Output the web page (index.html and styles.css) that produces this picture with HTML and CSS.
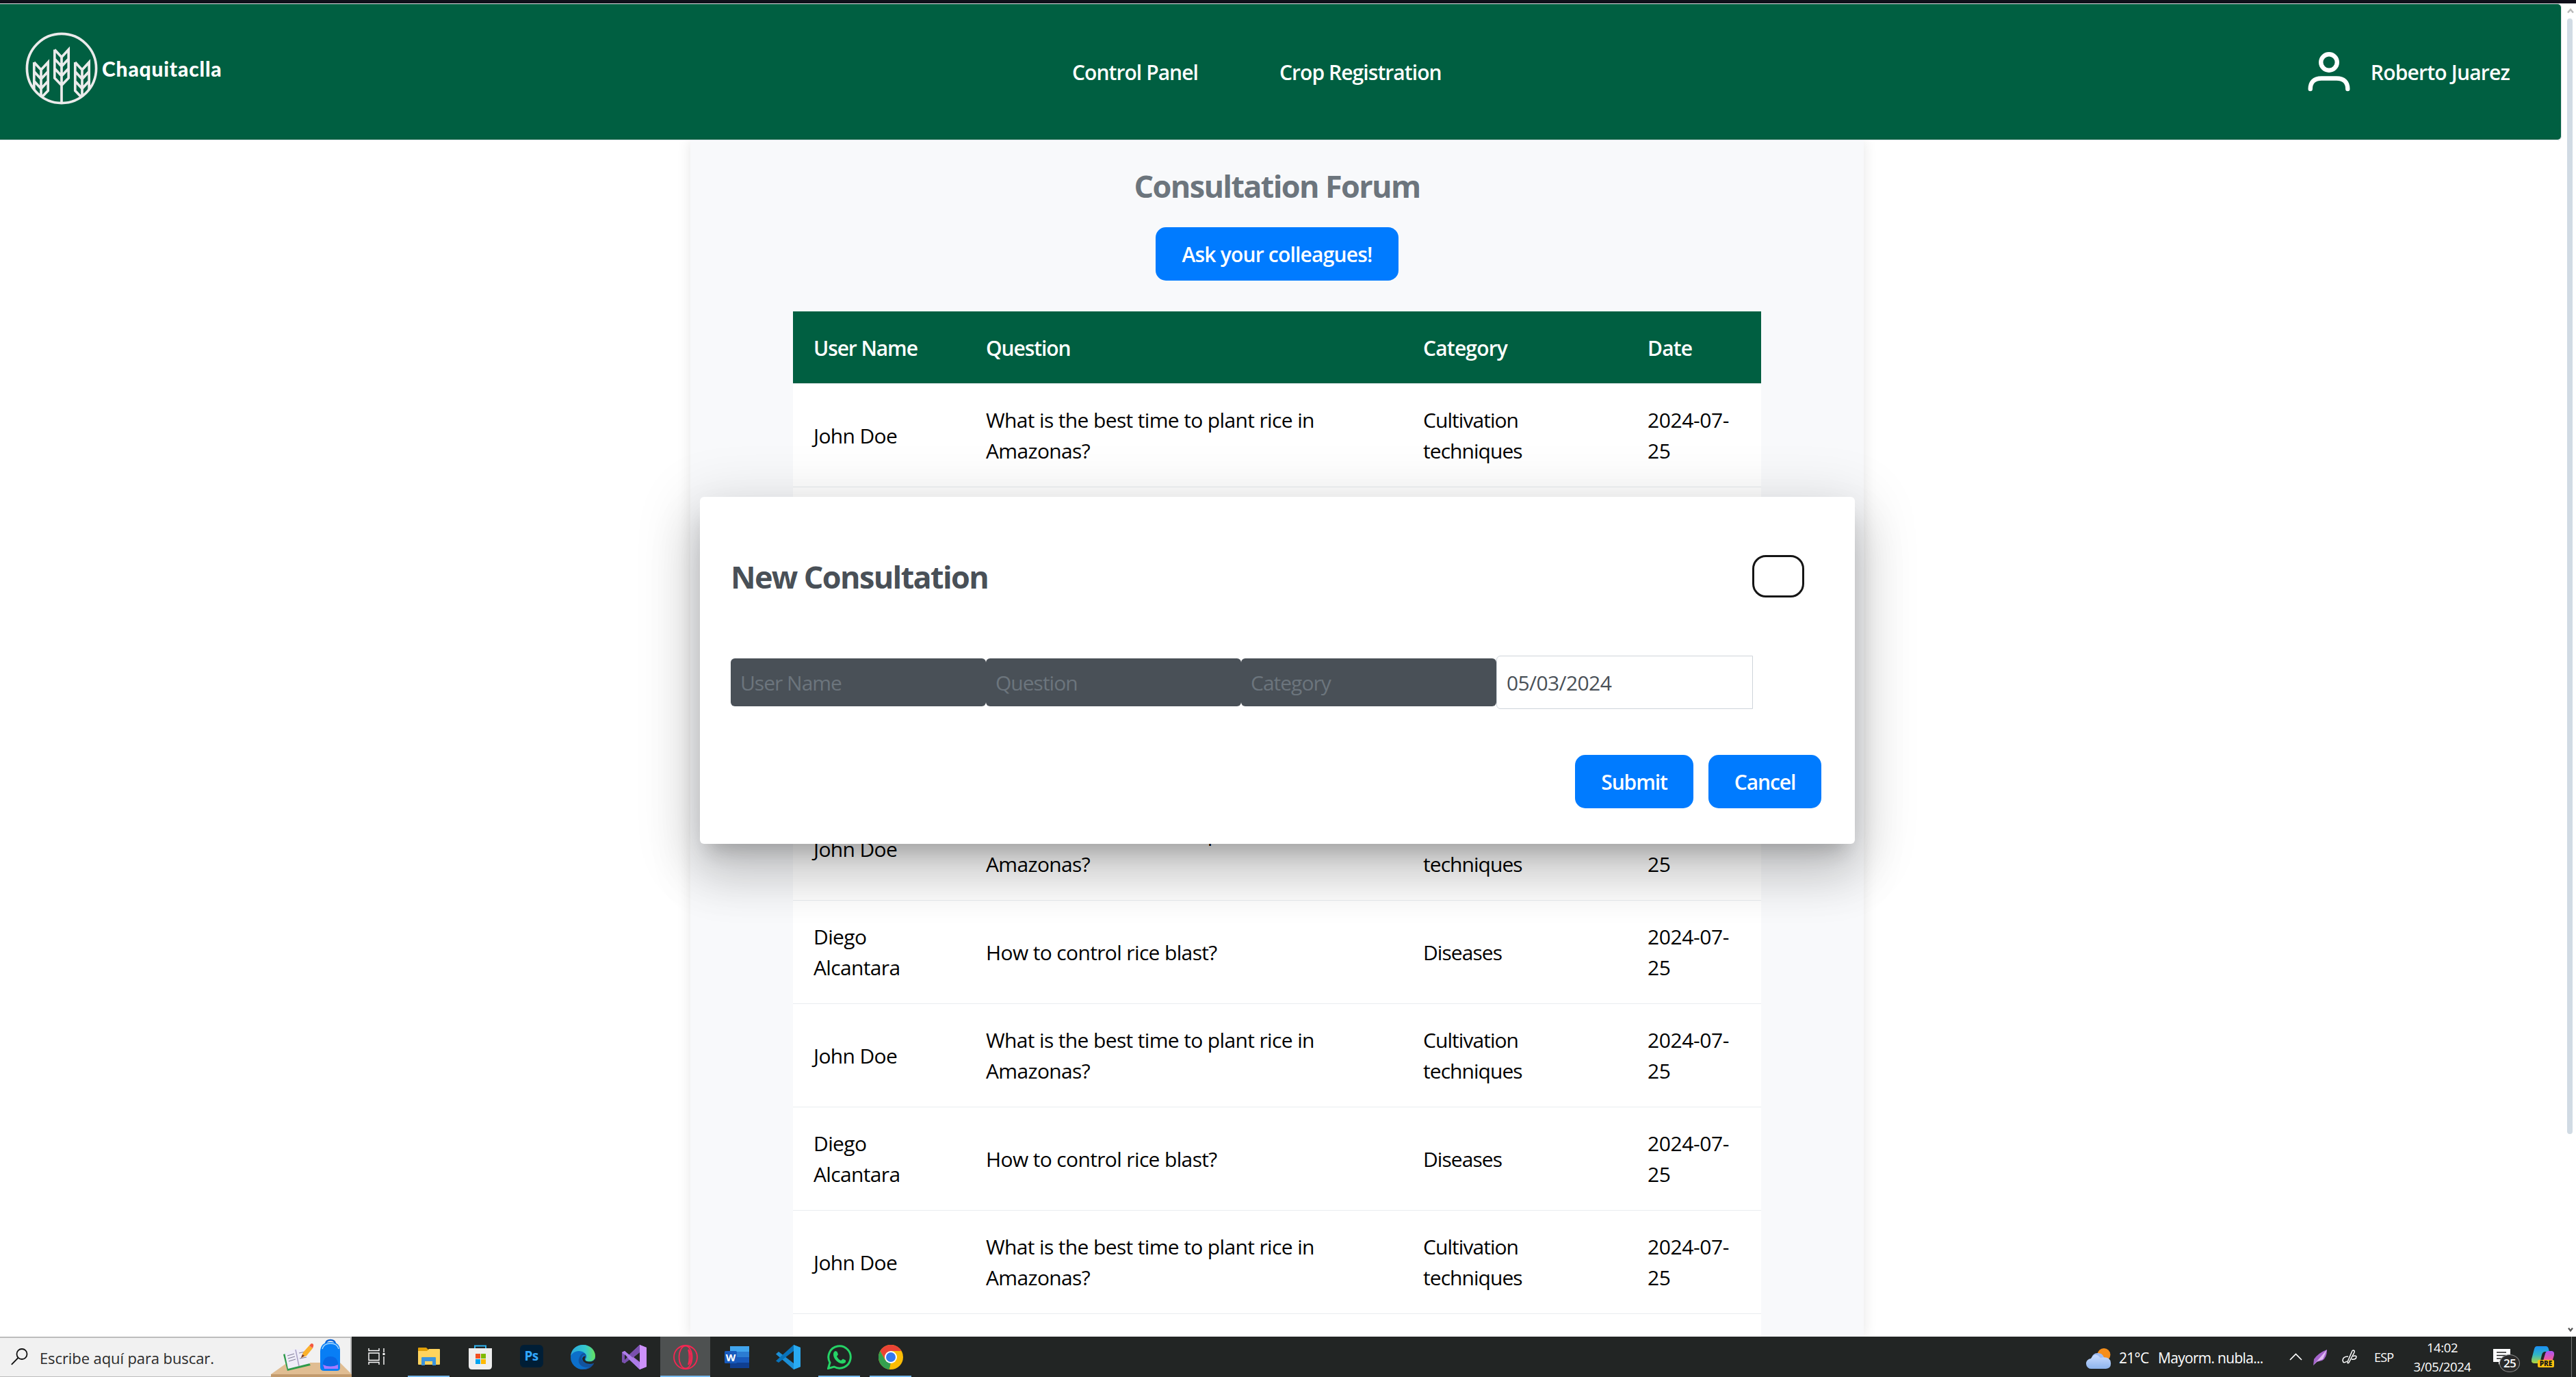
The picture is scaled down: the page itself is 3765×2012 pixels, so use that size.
FILE: index.html
```html
<!DOCTYPE html>
<html lang="en">
<head>
<meta charset="utf-8">
<title>Consultation Forum</title>
<link rel="stylesheet" href="styles.css">
</head>
<body>
<div class="window-edge"></div>
<div class="browser">
  <main class="page">
    <nav class="navbar">
      <div class="brand">
        <svg class="brand-mark" width="106" height="106" viewBox="37 47 106 106" fill="none" stroke="#ebebeb" stroke-width="3.7">
          <defs><clipPath id="disc"><circle cx="90" cy="100" r="52"/></clipPath></defs>
          <circle cx="90" cy="100" r="50.6"/>
          <g clip-path="url(#disc)">
            <g id="ear"><path d="M79.8 72.5V114L90 124.500L100.200 114V72.500L90 83.500L79.800 72.500M79.800 86L90 97L100.200 86M79.800 100L90 111L100.200 100M90 83V150"/></g>
            <use href="#ear" x="-30" y="18.500"/>
            <use href="#ear" x="30" y="18.500"/>
          </g>
        </svg>
        <span class="brand-name">Chaquitaclla</span>
      </div>
      <div class="links"><a>Control Panel</a><a>Crop Registration</a></div>
      <div class="user">
        <svg width="62" height="58" viewBox="0 0 62 58" fill="none" stroke="#fff" stroke-width="6.400" stroke-linecap="round"><circle cx="31" cy="15" r="11.800"/><path d="M3.700 54C3.700 44 9 38.500 20 38.500H42C53 38.500 58.300 44 58.300 54"/></svg>
        <span>Roberto Juarez</span>
      </div>
    </nav>
    <section class="forum">
      <h1>Consultation Forum</h1>
      <button class="btn ask">Ask your colleagues!</button>
      <table>
        <colgroup><col class="c1"><col class="c2"><col class="c3"><col class="c4"></colgroup>
        <thead><tr><th>User Name</th><th>Question</th><th>Category</th><th>Date</th></tr></thead>
        <tbody>
          <tr><td>John Doe</td><td>What is the best time to plant rice in<br>Amazonas?</td><td class="cat">Cultivation<br>techniques</td><td class="num">2024-07-<br>25</td></tr>
          <tr><td>Diego<br>Alcantara</td><td>How to control rice blast?</td><td class="cat">Diseases</td><td class="num">2024-07-<br>25</td></tr>
          <tr><td>John Doe</td><td>What is the best time to plant rice in<br>Amazonas?</td><td class="cat">Cultivation<br>techniques</td><td class="num">2024-07-<br>25</td></tr>
          <tr><td>Diego<br>Alcantara</td><td>How to control rice blast?</td><td class="cat">Diseases</td><td class="num">2024-07-<br>25</td></tr>
          <tr><td>John Doe</td><td>What is the best time to plant rice in<br>Amazonas?</td><td class="cat">Cultivation<br>techniques</td><td class="num">2024-07-<br>25</td></tr>
          <tr><td>Diego<br>Alcantara</td><td>How to control rice blast?</td><td class="cat">Diseases</td><td class="num">2024-07-<br>25</td></tr>
          <tr><td>John Doe</td><td>What is the best time to plant rice in<br>Amazonas?</td><td class="cat">Cultivation<br>techniques</td><td class="num">2024-07-<br>25</td></tr>
          <tr><td>Diego<br>Alcantara</td><td>How to control rice blast?</td><td class="cat">Diseases</td><td class="num">2024-07-<br>25</td></tr>
          <tr><td>John Doe</td><td>What is the best time to plant rice in<br>Amazonas?</td><td class="cat">Cultivation<br>techniques</td><td class="num">2024-07-<br>25</td></tr>
          <tr class="tail"><td></td><td></td><td></td><td></td></tr>
        </tbody>
      </table>
    </section>
  </main>
  <div class="scrollbar">
    <svg width="10" height="8" viewBox="0 0 10 8" fill="none" stroke="#b9b9b9" stroke-width="2.500"><path d="M1 6.500L5 2L9 6.500"/></svg>
    <div class="thumb"></div>
    <svg class="down" width="10" height="8" viewBox="0 0 10 8" fill="none" stroke="#555" stroke-width="2.200"><path d="M2 1.500L5 5.500L8 1.500"/></svg>
  </div>
  <div class="dialog">
    <header><h2>New Consultation</h2><button class="close" aria-label="Close"></button></header>
    <div class="fields">
      <div class="field">User Name</div><div class="field">Question</div><div class="field">Category</div><div class="field date">05/03/2024</div>
    </div>
    <footer><button class="btn submit">Submit</button><button class="btn cancel">Cancel</button></footer>
  </div>
</div>
<div class="taskbar">
  <div class="search">
    <svg class="lens" width="25" height="25" viewBox="0 0 25 25" fill="none" stroke="#111" stroke-width="1.800"><circle cx="16" cy="8.500" r="7.500"/><path d="M10.500 14L.8 23.800"/></svg>
    <span>Escribe aquí para buscar.</span>
    <svg class="doodle" width="118" height="57" viewBox="396 1955 118 57">
      <path d="M396 2008L420 1991H497L514 2008Z" fill="#e0bd92"/><path d="M396 2008H514V2012H396Z" fill="#c29a6c"/>
      <path d="M414 1979L420 2003L454 1995L451 1990L422 1997L417 1978Z" fill="#2e9a4b"/>
      <path d="M416 1976L432 1971L436 1972L448 1969L453 1992L437 1996L421 2000Z" fill="#efedf8"/>
      <path d="M432 1972L437 1996" stroke="#a9a2c6" stroke-width="1.500"/>
      <path d="M420 1981L430 1978M421 1985L431 1982M422 1989L432 1986M437 1977L446 1975M438 1985L448 1983" stroke="#85819c" stroke-width="1.200"/>
      <path d="M440 1984L443 1976L452 1966L457 1970L448 1981Z" fill="#fbb12c"/><path d="M440 1984L442 1979L445 1981Z" fill="#713434"/><path d="M452 1966L455 1963Q459 1963 458 1967L457 1970Z" fill="#f4593f"/>
      <path d="M476 1963Q477 1958 483 1958T490 1963" fill="none" stroke="#0961d6" stroke-width="2.500"/>
      <path d="M468 1974Q469 1961 483 1961T497 1974V1999Q497 2003 492 2003H474Q468 2003 468 1998Z" fill="#087ef5"/>
      <path d="M471 1971Q473 1963 483 1963T495 1971" fill="none" stroke="#a7d8ff" stroke-width="1.500"/>
      <path d="M472 1991Q474 1982 483 1982T494 1991V1999H472Z" fill="#0867e5"/><path d="M472 1994Q483 1999 494 1994V2000H474Z" fill="#a879ff"/>
    </svg>
  </div>
  <div class="apps">
    <div class="app taskview"><svg width="26" height="24" viewBox="0 0 26 24" fill="none" stroke="#fff" stroke-width="1.400"><path d="M1 0V3.500H16V0M1 7H16V17.500H1ZM1 24V20.500H16V24M23 0V6M23 12V24"/><path d="M21.500 7H24.500V10H21.500Z" fill="#fff" stroke="none"/></svg></div>
    <div class="app open"><svg width="36" height="36"><path d="M2 5Q2 4 3 4H14L17 7V14H2Z" fill="#e1a008"/><path d="M2 9L15 9L18 6H33Q34 6 34 7V28Q34 29 33 29H3Q2 29 2 28Z" fill="#ffd45d"/><path d="M7 30V19Q7 18 8 18H27Q28 18 28 19V30H23V24H12V30Z" fill="#3b94dd"/></svg></div>
    <div class="app"><svg width="36" height="36"><path d="M10 8V1.500H26V8" fill="none" stroke="#30b4f0" stroke-width="2"/><path d="M1 5H35V31Q35 36 30 36H6Q1 36 1 31Z" fill="#eee"/><path d="M11 13h7v7h-7z" fill="#f25022"/><path d="M19 13h7v7h-7z" fill="#7fba00"/><path d="M11 21h7v7h-7z" fill="#00a4ef"/><path d="M19 21h7v7h-7z" fill="#ffb900"/></svg></div>
    <div class="app"><span class="ps">Ps</span></div>
    <div class="app"><svg width="36" height="36"><defs><linearGradient id="e" x2="1"><stop stop-color="#2aa8dc"/><stop offset=".6" stop-color="#35c8cf"/><stop offset="1" stop-color="#66e35a"/></linearGradient></defs><circle cx="18" cy="18" r="18" fill="#0c6fca"/><path d="M0 17C1 5 10 0 18 0C29 0 36 8 36 16C36 23 30 25 26 24.500C21 24 21 21 23 19C24 13 18 9 12 9C6 9 1 13 0 17Z" fill="url(#e)"/><path d="M13 18C9 26 15 33 24 33C30 32 33 29 34 27C28 30 18 28 16 20C16 15 20 12 23 18C23 11 17 10 13 18Z" fill="#12539f"/><path d="M21 19C20 22 21 24 26 24.500C30 25 33 24 35 21L40 24L34 27C28 29 18 28 17 20Q19 15 22 17Z" fill="#222625"/><path d="M34 27C31 34 22 38 14 35C22 37 29 32 33 27Z" fill="#174f99"/></svg></div>
    <div class="app"><svg width="36" height="36"><path d="M26 0L36 4V32L26 36L10 21L4 27L0 25V11L4 9L10 15Z" fill="#a974de"/><path d="M0 11L4 9L10 15L26 0V11L15 19L4 27L0 25Z" fill="#7950ae"/><path d="M4 9L26 27V36L0 11Z" fill="#ad7ce8"/><path d="M26 0L36 4V32L26 36Z" fill="#cd91fa"/><path d="M4 14V22L8 18ZM26 11V25L17 18Z" fill="#222625"/></svg></div>
    <div class="app open active"><svg width="36" height="36" fill="none" stroke="#f52652" stroke-width="1.800"><circle cx="18" cy="18" r="17"/><ellipse cx="18" cy="18" rx="9.500" ry="16.500"/><path d="M22 7C27 12 27 24 22 29C24 23 24 13 22 7"/></svg></div>
    <div class="app"><svg width="36" height="36"><path d="M8 2H36V10H8Z" fill="#41a5ee"/><path d="M8 10H36V18H8Z" fill="#2b7cd3"/><path d="M8 18H36V26H8Z" fill="#185abd"/><path d="M8 26H36V34H8Z" fill="#103f91"/><rect y="9" width="18" height="18" rx="1.500" fill="#185abd"/><text x="9" y="23.500" class="word">W</text></svg></div>
    <div class="app"><svg width="36" height="36"><path d="M26 0L36 4V32L26 36L0 13.500L4 10L26 27Z" fill="#1c8fd6"/><path d="M0 23.500L26 0V9L4 26Z" fill="#0873bb"/><path d="M26 0L36 4V32L26 36Z" fill="#29aaf1"/></svg></div>
    <div class="app open"><svg width="36" height="36"><path d="M1.500 34.500L4 26A16.200 16.200 0 1 1 10 32Z" fill="none" stroke="#25d366" stroke-width="3"/><path d="M12 9L14.500 10L16 14L14 17Q16 21 20 23L23 20.500L27 22.500Q28 27 22 27.500C15 27 9 20 9 14Q9 10 12 9Z" fill="#25d366"/></svg></div>
    <div class="app open"><svg width="36" height="36"><circle cx="18" cy="18" r="18" fill="#fbbc05"/><path d="M2.400 9A18 18 0 0 1 33.600 9H18L10 22Z" fill="#ea4335"/><path d="M2.400 9L10 22.500L18 27L16 36A18 18 0 0 1 2.400 9Z" fill="#34a04f"/><path d="M26 22L18 36H16L18 26Z" fill="#fbbc05"/><circle cx="18" cy="18" r="9" fill="#fff"/><circle cx="18" cy="18" r="7" fill="#3478ee"/></svg></div>
  </div>
  <div class="tray">
    <svg class="weather" width="37" height="31"><defs><linearGradient id="cl" y2="1" x2="0"><stop stop-color="#c9dcff"/><stop offset="1" stop-color="#8db4ed"/></linearGradient></defs><circle cx="26" cy="9.500" r="9.500" fill="#f58e1b"/><path d="M8 22A9 9 0 0 1 8 14A9.500 9.500 0 0 1 26 13L28 22Z" fill="#9fbcf2"/><path d="M8 30A7.500 7.500 0 0 1 7 15Q13 5 21 14Q35 11 36 21Q37 29 29 30Z" fill="url(#cl)"/></svg>
    <span class="temp">21°C</span><span class="sky">Mayorm. nubla...</span>
    <svg class="chev" width="19" height="11" fill="none" stroke="#fff" stroke-width="1.600"><path d="M1 10L9.500 1.500L18 10"/></svg>
    <svg class="feather" width="22" height="24"><path d="M1 24L2 15Q8 6 21 1Q21 13 14 17L6 19Z" fill="#a565cc"/><path d="M1 24L21 1L15 15L7 18Z" fill="#e2bcf3"/></svg>
    <svg class="pen" width="22" height="22" fill="none" stroke="#fff" stroke-width="1.500"><path d="M16 1Q19 1 18 4L10 19Q8 21 8 18L14 4Q15 1 16 1ZM9 10Q1 10 1 16Q2 21 7 17M14 14Q21 15 21 10Q19 8 16 10"/></svg>
    <span class="lang">ESP</span>
    <div class="clock"><span>14:02</span><span>3/05/2024</span></div>
    <div class="notice"><svg width="25" height="24"><path d="M0 0H25V19H12L8 23V19H0Z" fill="#fff"/><path d="M5 5H19M5 9.500H19M5 14H14" stroke="#222" stroke-width="1.600"/></svg><span class="count">25</span></div>
    <div class="copilot"><svg width="33" height="27"><defs><linearGradient id="a" x2="0" y2="1"><stop stop-color="#1b8ff5"/><stop offset=".5" stop-color="#31b6c4"/><stop offset="1" stop-color="#b2d639"/></linearGradient><linearGradient id="b" x2="0" y2="1"><stop stop-color="#a855f7"/><stop offset=".6" stop-color="#ef5a9d"/><stop offset="1" stop-color="#ff8c46"/></linearGradient></defs><path d="M8 0H21Q24 0 25 4L26 8H20Q16 8 15 13L13 21Q12 25 8 25H4Q-1 25 0 19L4 4Q5 0 8 0Z" fill="url(#a)"/><path d="M25 7H30Q34 8 33 13L30 23Q29 27 25 27H12Q16 26 17 21L20 11Q21 7 25 7Z" fill="url(#b)"/></svg><span>PRE</span></div>
    <div class="peek"></div>
  </div>
</div>
</body>
</html>
```
FILE: styles.css
```css
* { box-sizing: border-box; }
body { margin: 0; width: 3765px; height: 2012px; overflow: hidden; display: flex; flex-direction: column; background: #fff; font: 400 30px/45px "Open Sans", sans-serif; letter-spacing: -0.64px; color: #000; }
svg { display: block; flex: none; }
h1, h2 { margin: 0; font-size: 45px; line-height: 62px; font-weight: 700; letter-spacing: -1.65px; }
.window-edge { height: 5px; flex: none; background: #100f1a; }
.browser { position: relative; height: 1948px; flex: none; display: flex; overflow: hidden; }
.page { width: 3744px; display: flex; flex-direction: column; align-items: center; }

.navbar { position: relative; z-index: 1; width: 3744px; height: 200px; flex: none; display: flex; align-items: center; background: #005f41; border: 1px solid #dfe3e7; border-left: 0; border-radius: 0 6px 6px 0; color: #fff; font-weight: 600; }
.brand { width: 1567px; padding: 0 0 10px 37px; display: flex; align-items: center; gap: 6px; }
.brand-name { font: 900 30px/40px "Lato", sans-serif; letter-spacing: 0.8px; }
.links { display: flex; gap: 119px; padding-top: 1px; letter-spacing: -0.94px; white-space: nowrap; }
.user { margin-left: auto; padding-right: 75px; display: flex; align-items: center; gap: 30px; letter-spacing: -0.8px; }

.forum { width: 1715px; flex: 1; min-height: 0; margin-right: 11px; padding-top: 36px; display: flex; flex-direction: column; align-items: center; background: #f8f9fb; box-shadow: 0 0 19px rgba(0,0,0,.1); }
.forum h1 { color: #6c757d; }
.btn { height: 78px; padding: 1px 0 0; border: 0; border-radius: 15px; background: #007bff; color: #fff; font: 600 30px/77px "Open Sans", sans-serif; letter-spacing: -0.8px; }
.ask { width: 355px; margin: 29px 0 45px; flex: none; }
table { width: 1415px; table-layout: fixed; border-collapse: separate; border-spacing: 0; background: #fff; }
.c1 { width: 252px; }
.c2 { width: 639px; }
.c3 { width: 328px; }
.c4 { width: 196px; }
th { height: 106px; padding: 1px 30px 0; text-align: left; font-weight: 600; letter-spacing: -1.1px; color: #fff; background: #005f41; border-bottom: 1px solid #e9ecef; }
th:nth-child(n+3) { letter-spacing: -0.8px; }
td { height: 151px; padding: 0 30px; border-bottom: 1px solid #e9ecef; vertical-align: middle; }
.num { letter-spacing: -0.4px; }
.cat { letter-spacing: -0.95px; }

.scrollbar { width: 21px; padding: 7px 0 6px 8px; display: flex; flex-direction: column; }
.thumb { width: 8px; height: 1630px; margin-top: 7px; border-radius: 4px; background: #d1dbe4; }
.down { margin-top: auto; }

.dialog { position: absolute; z-index: 2; left: 1023px; top: 721px; width: 1688px; height: 507px; padding: 85px 0 0 45px; border-radius: 6px; background: #fff; box-shadow: 0 21px 28px -13px rgba(0,0,0,.2), 0 45px 71px 6px rgba(0,0,0,.14), 0 17px 86px 15px rgba(0,0,0,.12); }
.dialog header { height: 62px; padding-right: 74px; display: flex; justify-content: space-between; }
.dialog h2 { color: #495057; margin-top: 1px; }
.close { width: 76px; height: 62px; border: 3.5px solid #151515; border-radius: 20px; background: #fff; }
.fields { height: 78px; margin-top: 85px; display: flex; align-items: center; }
.field { width: 373px; height: 70px; padding-left: 14px; border-radius: 6px; background: #495057; color: #6c757d; line-height: 72px; letter-spacing: -1px; }
.date { width: 375px; height: 78px; line-height: 78px; border: 1px solid #ced4da; border-radius: 6px 0 0 6px; background: #fff; color: #495057; letter-spacing: -0.6px; }
.dialog footer { margin-top: 67px; padding-right: 49px; display: flex; justify-content: flex-end; gap: 22px; }
.submit { width: 173px; letter-spacing: -1.1px; }
.cancel { width: 165px; letter-spacing: -1.1px; }

.taskbar { height: 59px; flex: none; display: flex; background: #222524; color: #fff; }
.search { width: 514px; padding-left: 16px; display: flex; align-items: center; background: #f1f1f1; border: solid #bdbdbd; border-width: 2px 2px 1px 0; font-size: 22px; letter-spacing: -0.1px; color: #2b2b2b; }
.lens { margin: 0 17px 1px 0; }
.search span { width: 338px; white-space: nowrap; margin-top: 3px; }
.doodle { margin-right: -2px; }
.apps { display: flex; gap: 2px; margin-left: 1px; }
.app { width: 73px; display: flex; align-items: center; justify-content: center; padding-bottom: 1px; }
.taskview { padding-right: 2px; }
.app:nth-child(n+2) { padding-top: 2px; }
.open { background: linear-gradient(#76b9ed, #76b9ed) center bottom / 61px 2px no-repeat; }
.active { background: linear-gradient(#76b9ed, #76b9ed) center bottom / 73px 2px no-repeat #4e5151; }
.ps { width: 34px; height: 33px; margin-bottom: 4px; border-radius: 6px; background: #001e36; color: #31a8ff; font-size: 19px; line-height: 32px; font-weight: 700; text-align: center; }
.word { fill: #fff; font: 700 15px "Open Sans", sans-serif; text-anchor: middle; letter-spacing: 0; }
.tray { margin-left: auto; display: flex; align-items: center; font-size: 21px; letter-spacing: -0.7px; white-space: nowrap; }
.weather { margin: 5px 11px 0 0; }
.temp { width: 57px; margin-top: 3px; }
.sky { width: 192px; margin-top: 3px; }
.chev { margin-right: 15px; }
.feather { margin-right: 21px; }
.pen { margin-right: 25px; }
.lang { width: 58px; font-size: 18px; letter-spacing: -0.8px; margin-top: 2px; }
.clock { width: 83px; display: flex; flex-direction: column; align-items: center; font-size: 18.500px; line-height: 28px; letter-spacing: -0.4px; }
.notice { position: relative; width: 56px; margin-left: 33px; }
.count { position: absolute; left: 9px; top: 8px; width: 30px; height: 26px; border: 1px solid #888; border-radius: 50%; background: #2b2b2b; font-size: 17px; font-weight: 600; line-height: 24px; text-align: center; }
.copilot { position: relative; width: 33px; height: 31px; }
.copilot span { position: absolute; right: 0; bottom: 0; width: 24px; height: 11px; border-radius: 2px; background: #ffc20e; color: #161616; font-size: 10px; font-weight: 800; line-height: 11px; letter-spacing: 0; text-align: center; }
.peek { width: 1px; height: 59px; margin: 0 6px 0 25px; background: #777; }
```
